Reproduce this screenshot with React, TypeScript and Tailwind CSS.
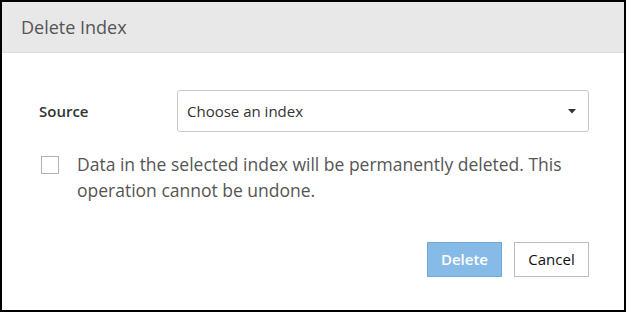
import { useState } from 'react';

const App = () => {
  const [checked, setChecked] = useState(false);

  return (
    <div className="w-[626px] h-[312px] bg-white border-2 border-black flex flex-col font-['Open_Sans',sans-serif]">
      {/* Header */}
      <div className="h-[51px] shrink-0 bg-[#e8e8e8] border-b border-[#dcdcdc] flex items-center pl-[19px]">
        <h2 className="text-[18px] text-[#555] leading-none">Delete Index</h2>
      </div>

      {/* Body */}
      <div className="flex-1 flex flex-col pl-[37px] pr-[35px] pt-[37px]">
        <div className="flex items-center h-[42px]">
          <label className="w-[138px] text-[15px] font-semibold text-[#333]">Source</label>
          <button className="flex-1 h-[42px] border border-[#c8c8c8] rounded-[3px] flex items-center justify-between pl-[9px] pr-[12px] text-[15px] text-[#333]">
            <span>Choose an index</span>
            <svg width="8" height="5" viewBox="0 0 8 5">
              <path d="M0 0 L8 0 L4 4.5 Z" fill="#333" />
            </svg>
          </button>
        </div>

        <div className="flex items-start mt-[19px]">
          <button
            onClick={() => setChecked(!checked)}
            className="mt-[5px] ml-[2px] w-[18px] h-[18px] shrink-0 border border-[#b0b0b0] bg-white"
          />
          <p className="ml-[18px] text-[17.5px] leading-[26px] text-[#555]">
            Data in the selected index will be permanently deleted. This operation cannot be undone.
          </p>
        </div>

        <div className="flex justify-end gap-[12px] mt-auto mb-[33px]">
          <button className="w-[75px] h-[35px] bg-[#85bbe6] border border-[#72a9d8] text-white font-semibold text-[15px]">
            Delete
          </button>
          <button className="w-[75px] h-[35px] bg-white border border-[#bdbdbd] text-[#111] text-[15px]">
            Cancel
          </button>
        </div>
      </div>
    </div>
  );
};

export default App;
